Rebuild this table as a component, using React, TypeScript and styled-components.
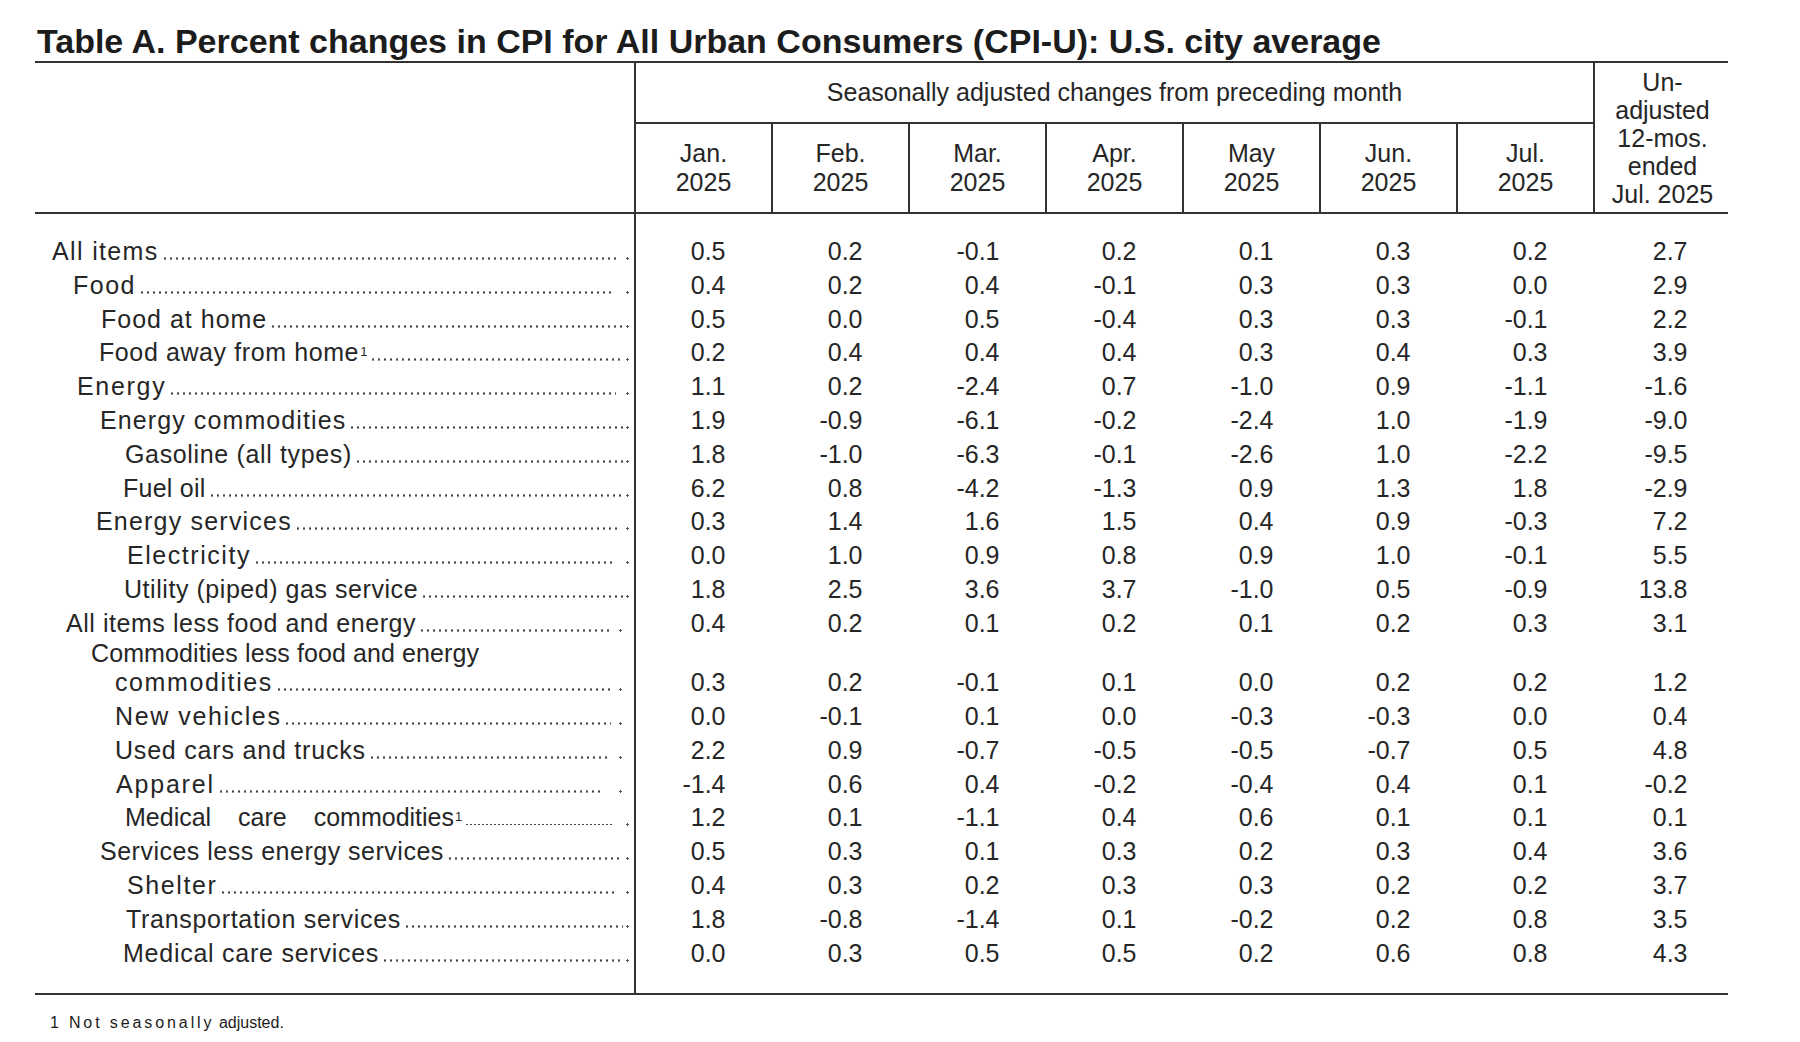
import React from "react";
import styled, { createGlobalStyle } from "styled-components";

const GlobalStyle = createGlobalStyle`
  html, body { margin: 0; padding: 0; background: #ffffff; }
  body {
    font-family: "Liberation Sans", Arial, Helvetica, sans-serif;
    color: #262626;
  }
`;

const LINE = "#333333";
const BODY_COLS = "601px repeat(7, 137px) 133px";
const ROW_H = 33.8;

type RowData = {
  label: string;
  sup?: boolean;
  indent: number;
  ls: number;
  ws?: number;
  end?: number;
  gap?: number;
  dense?: boolean;
  second?: { label: string; indent: number; ls: number };
  v: string[];
};

const rows: RowData[] = [
  { label: "All items", indent: 17, ls: 1.35, gap: 8, v: ["0.5", "0.2", "-0.1", "0.2", "0.1", "0.3", "0.2", "2.7"] },
  { label: "Food", indent: 38, ls: 1.5, gap: 14, v: ["0.4", "0.2", "0.4", "-0.1", "0.3", "0.3", "0.0", "2.9"] },
  { label: "Food at home", indent: 66, ls: 1.0, v: ["0.5", "0.0", "0.5", "-0.4", "0.3", "0.3", "-0.1", "2.2"] },
  { label: "Food away from home", sup: true, indent: 64, ls: 0.6, v: ["0.2", "0.4", "0.4", "0.4", "0.3", "0.4", "0.3", "3.9"] },
  { label: "Energy", indent: 42, ls: 1.7, gap: 10, v: ["1.1", "0.2", "-2.4", "0.7", "-1.0", "0.9", "-1.1", "-1.6"] },
  { label: "Energy commodities", indent: 65, ls: 1.1, v: ["1.9", "-0.9", "-6.1", "-0.2", "-2.4", "1.0", "-1.9", "-9.0"] },
  { label: "Gasoline (all types)", indent: 90, ls: 0.65, v: ["1.8", "-1.0", "-6.3", "-0.1", "-2.6", "1.0", "-2.2", "-9.5"] },
  { label: "Fuel oil", indent: 88, ls: 0.25, v: ["6.2", "0.8", "-4.2", "-1.3", "0.9", "1.3", "1.8", "-2.9"] },
  { label: "Energy services", indent: 61, ls: 1.2, gap: 8, v: ["0.3", "1.4", "1.6", "1.5", "0.4", "0.9", "-0.3", "7.2"] },
  { label: "Electricity", indent: 92, ls: 1.55, gap: 14, v: ["0.0", "1.0", "0.9", "0.8", "0.9", "1.0", "-0.1", "5.5"] },
  { label: "Utility (piped) gas service", indent: 89, ls: 0.55, v: ["1.8", "2.5", "3.6", "3.7", "-1.0", "0.5", "-0.9", "13.8"] },
  { label: "All items less food and energy", indent: 31, ls: 0.55, end: 11.6, gap: 8, v: ["0.4", "0.2", "0.1", "0.2", "0.1", "0.2", "0.3", "3.1"] },
  {
    label: "Commodities less food and energy",
    indent: 56,
    ls: 0.1,
    end: 11.6,
    gap: 8,
    second: { label: "commodities", indent: 80, ls: 1.6 },
    v: ["0.3", "0.2", "-0.1", "0.1", "0.0", "0.2", "0.2", "1.2"],
  },
  { label: "New vehicles", indent: 80, ls: 1.6, end: 11.6, gap: 8, v: ["0.0", "-0.1", "0.1", "0.0", "-0.3", "-0.3", "0.0", "0.4"] },
  { label: "Used cars and trucks", indent: 80, ls: 0.8, end: 11.6, gap: 8, v: ["2.2", "0.9", "-0.7", "-0.5", "-0.5", "-0.7", "0.5", "4.8"] },
  { label: "Apparel", indent: 81, ls: 1.8, end: 11.6, gap: 16, v: ["-1.4", "0.6", "0.4", "-0.2", "-0.4", "0.4", "0.1", "-0.2"] },
  { label: "Medical care commodities", sup: true, indent: 90, ls: 0, ws: 20, gap: 14, dense: true, v: ["1.2", "0.1", "-1.1", "0.4", "0.6", "0.1", "0.1", "0.1"] },
  { label: "Services less energy services", indent: 65, ls: 0.5, v: ["0.5", "0.3", "0.1", "0.3", "0.2", "0.3", "0.4", "3.6"] },
  { label: "Shelter", indent: 92, ls: 1.6, gap: 12, v: ["0.4", "0.3", "0.2", "0.3", "0.3", "0.2", "0.2", "3.7"] },
  { label: "Transportation services", indent: 91, ls: 0.7, v: ["1.8", "-0.8", "-1.4", "0.1", "-0.2", "0.2", "0.8", "3.5"] },
  { label: "Medical care services", indent: 88, ls: 0.75, v: ["0.0", "0.3", "0.5", "0.5", "0.2", "0.6", "0.8", "4.3"] },
];

const months = [
  ["Jan.", "2025"],
  ["Feb.", "2025"],
  ["Mar.", "2025"],
  ["Apr.", "2025"],
  ["May", "2025"],
  ["Jun.", "2025"],
  ["Jul.", "2025"],
];

const Page = styled.div`
  width: 1693px;
  padding: 23px 0 0 35px;
`;

const Title = styled.h1`
  margin: 0;
  padding-left: 2px;
  font-size: 34px;
  line-height: 36px;
  font-weight: 700;
  color: #1c1c1c;
  white-space: nowrap;
`;

const Table = styled.div`
  margin-top: 2px;
  border-top: 2px solid ${LINE};
  border-bottom: 2px solid ${LINE};
  font-size: 25px;
`;

const Header = styled.div`
  display: grid;
  grid-template-columns: 601px 959px 133px;
  height: 149px;
  border-bottom: 2px solid ${LINE};
`;

const HeaderStub = styled.div`
  border-right: 2px solid ${LINE};
`;

const HeaderGroup = styled.div`
  display: flex;
  flex-direction: column;
  border-right: 2px solid ${LINE};
`;

const GroupTitle = styled.div`
  height: 59px;
  border-bottom: 2px solid ${LINE};
  display: flex;
  align-items: center;
  justify-content: center;
  white-space: nowrap;
`;

const MonthRow = styled.div`
  flex: 1;
  display: grid;
  grid-template-columns: repeat(6, 137px) 135px;
`;

const MonthCell = styled.div`
  display: flex;
  flex-direction: column;
  align-items: center;
  justify-content: center;
  line-height: 29px;
  &:not(:last-child) {
    border-right: 2px solid ${LINE};
  }
`;

const UnadjCell = styled.div`
  display: flex;
  flex-direction: column;
  align-items: center;
  justify-content: center;
  line-height: 28px;
  padding-left: 2px;
  white-space: nowrap;
`;

const Row = styled.div<{ $h: number }>`
  display: grid;
  grid-template-columns: ${BODY_COLS};
  height: ${(p) => p.$h}px;
`;

const StubCell = styled.div`
  display: flex;
  flex-direction: column;
  justify-content: flex-end;
  border-right: 2px solid ${LINE};
`;

const LabelLine = styled.div<{ $indent: number; $end: number; $h: number }>`
  display: flex;
  align-items: baseline;
  height: ${(p) => p.$h}px;
  line-height: ${(p) => p.$h}px;
  padding-left: ${(p) => p.$indent}px;
  padding-right: ${(p) => p.$end}px;
  white-space: nowrap;
`;

const LabelText = styled.span<{ $ls: number; $ws: number }>`
  letter-spacing: ${(p) => p.$ls}px;
  word-spacing: ${(p) => p.$ws}px;
  flex: none;
`;

const Sup = styled.sup`
  font-size: 13px;
  line-height: 0;
  vertical-align: 5px;
  letter-spacing: 0;
  margin-left: 1px;
`;

const Leader = styled.span<{ $dense: boolean }>`
  flex: 1 1 auto;
  min-width: 0;
  height: 3px;
  margin-left: 3px;
  background-image: radial-gradient(circle at center, #444 0 ${(p) => (p.$dense ? 0.8 : 0.95)}px, transparent ${(p) => (p.$dense ? 1.1 : 1.35)}px);
  background-size: ${(p) => (p.$dense ? 4 : 6)}px 3px;
  background-repeat: repeat-x;
  background-position: left center;
`;

const EndDot = styled.span<{ $gap: number }>`
  flex: none;
  width: 3px;
  height: 3px;
  margin-left: ${(p) => p.$gap}px;
  background-image: radial-gradient(circle at center, #444 0 0.95px, transparent 1.35px);
`;

const ValueCell = styled.div<{ $last: boolean; $h: number }>`
  display: flex;
  align-items: flex-end;
  justify-content: flex-end;
  line-height: ${(p) => p.$h}px;
  padding-right: ${(p) => (p.$last ? 40.5 : 47.5)}px;
`;

const Footnote = styled.div`
  display: flex;
  align-items: baseline;
  margin-top: 19px;
  padding-left: 15px;
  font-size: 16px;
  line-height: 18px;
  color: #1c1c1c;
`;

const FootNum = styled.span`
  margin-right: 10px;
`;

const Spaced = styled.span`
  letter-spacing: 2.9px;
`;

function LabelBlock({
  text,
  sup,
  indent,
  ls,
  ws,
  end,
  gap,
  dense,
  h,
}: {
  text: string;
  sup?: boolean;
  indent: number;
  ls: number;
  ws?: number;
  end: number;
  gap: number;
  dense?: boolean;
  h: number;
}) {
  return (
    <LabelLine $indent={indent} $end={end} $h={h}>
      <LabelText $ls={ls} $ws={ws ?? 0}>
        {text}
        {sup && <Sup>1</Sup>}
      </LabelText>
      <Leader $dense={!!dense} />
      <EndDot $gap={gap} />
    </LabelLine>
  );
}

function DataRow({ r }: { r: RowData }) {
  const double = !!r.second;
  const lineH = double ? 35.5 : ROW_H;
  const end = r.end ?? 5.3;
  const gap = r.gap ?? 3;
  return (
    <Row $h={double ? 59.5 : ROW_H}>
      <StubCell>
        {r.second ? (
          <>
            <LabelLine $indent={r.indent} $end={end} $h={24}>
              <LabelText $ls={r.ls} $ws={0}>{r.label}</LabelText>
            </LabelLine>
            <LabelBlock
              text={r.second.label}
              indent={r.second.indent}
              ls={r.second.ls}
              end={end}
              gap={gap}
              h={lineH}
            />
          </>
        ) : (
          <LabelBlock
            text={r.label}
            sup={r.sup}
            indent={r.indent}
            ls={r.ls}
            ws={r.ws}
            end={end}
            gap={gap}
            dense={r.dense}
            h={lineH}
          />
        )}
      </StubCell>
      {r.v.map((val, i) => (
        <ValueCell key={i} $last={i === 7} $h={lineH}>
          {val}
        </ValueCell>
      ))}
    </Row>
  );
}

export default function App() {
  return (
    <>
      <GlobalStyle />
      <Page>
        <Title>Table A. Percent changes in CPI for All Urban Consumers (CPI-U): U.S. city average</Title>
        <Table>
          <Header>
            <HeaderStub />
            <HeaderGroup>
              <GroupTitle>Seasonally adjusted changes from preceding month</GroupTitle>
              <MonthRow>
                {months.map(([m, y]) => (
                  <MonthCell key={m}>
                    <span>{m}</span>
                    <span>{y}</span>
                  </MonthCell>
                ))}
              </MonthRow>
            </HeaderGroup>
            <UnadjCell>
              <span>Un-</span>
              <span>adjusted</span>
              <span>12-mos.</span>
              <span>ended</span>
              <span>Jul. 2025</span>
            </UnadjCell>
          </Header>
          <Row $h={21}>
            <StubCell />
          </Row>
          {rows.map((r) => (
            <DataRow key={r.label} r={r} />
          ))}
          <Row $h={22.5}>
            <StubCell />
          </Row>
        </Table>
        <Footnote>
          <FootNum>1</FootNum>
          <span>
            <Spaced>Not seasonally</Spaced> adjusted.
          </span>
        </Footnote>
      </Page>
    </>
  );
}
